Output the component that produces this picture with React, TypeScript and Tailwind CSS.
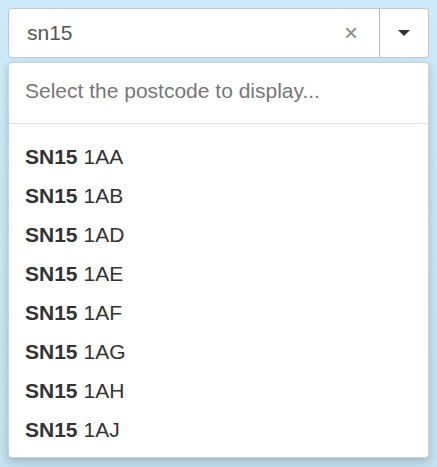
export default function App() {
  const items = ["1AA", "1AB", "1AD", "1AE", "1AF", "1AG", "1AH", "1AJ"];
  return (
    <div
      className="h-[467px] w-[437px] bg-gradient-to-b from-[#cdeafb] to-[#c3e1f1] p-2 text-[#333]"
      style={{ fontFamily: '"Liberation Sans", Arial, sans-serif' }}
    >
      {/* input group */}
      <div className="flex h-[50px] rounded-[4px] border border-[#c7c7c7] bg-white">
        <div className="flex flex-1 items-center pl-[18px] pr-[21px] text-[21px] text-[#555]">
          <span className="flex-1">sn15</span>
          <span className="text-[24px] leading-none text-[#888]">×</span>
        </div>
        <div className="flex w-[49px] items-center justify-center border-l border-[#bbb]">
          <span className="h-0 w-0 border-x-[6px] border-t-[6px] border-x-transparent border-t-[#333]" />
        </div>
      </div>

      {/* dropdown */}
      <div className="mt-1 rounded-[4px] border border-[#d0d0d0] bg-white shadow-[0_3px_8px_rgba(0,0,0,0.2)]">
        <div className="flex h-[61px] items-center border-b border-[#e0e0e0] px-4 pb-[5px] text-[21px] text-[#777]">
          Select the postcode to display...
        </div>
        <ul className="pt-[13px] pb-[8px]">
          {items.map((s) => (
            <li key={s} className="flex h-[39px] items-center px-4 text-[21px]">
              <b className="mr-[6px]">SN15</b>
              {s}
            </li>
          ))}
        </ul>
      </div>
    </div>
  );
}
